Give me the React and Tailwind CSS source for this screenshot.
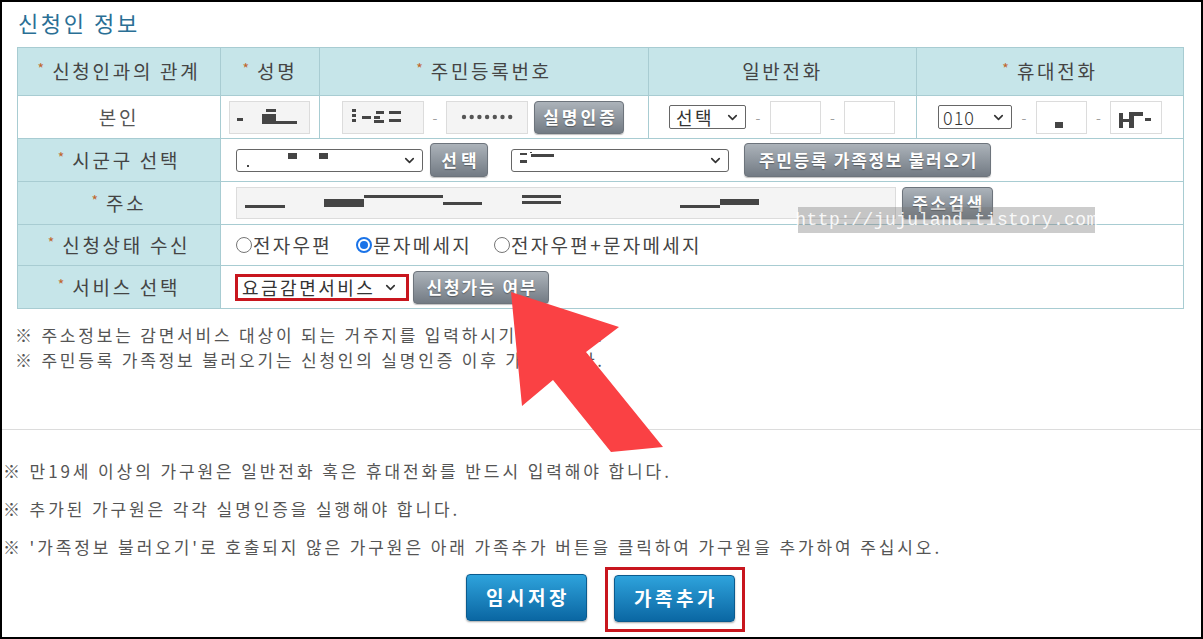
import React from "react";
import { ChevronDown } from "lucide-react";

function Star() {
  return (
    <span className="relative top-[-3px] mr-[8px] text-[14px] tracking-normal text-[#c0662b]">*</span>
  );
}

function Marks({ w, h, rects }) {
  return (
    <svg width={w} height={h} className="block">
      {rects.map(([x, y, rw, rh], i) => (
        <rect key={i} x={x} y={y} width={rw} height={rh} fill="#454545" />
      ))}
    </svg>
  );
}

function GrayBtn({ className, children }) {
  return (
    <div
      className={
        "flex shrink-0 items-center justify-center rounded-[4px] border border-[#6d747c] bg-linear-to-b from-[#acb3ba] to-[#737b84] text-[17px] font-bold text-white [text-shadow:0_1px_1px_rgba(0,0,0,0.35)] shadow-[0_1px_1px_rgba(0,0,0,0.25)] " +
        className
      }
    >
      {children}
    </div>
  );
}

function BlueBtn({ children }) {
  return (
    <div className="flex h-[47px] w-[121px] items-center justify-center rounded-[4px] border border-[#0b5b8e] bg-linear-to-b from-[#2ea3dc] to-[#0a67a3] pl-[3px] text-[19px] font-bold tracking-[3.5px] text-white shadow-[0_1px_2px_rgba(0,0,0,0.35)]">
      {children}
    </div>
  );
}

function Dash({ className }) {
  return <span className={"shrink-0 text-center text-[14px] text-[#a0a0a0] " + className}>-</span>;
}

function Radio({ checked }) {
  return checked ? (
    <span className="flex h-[16px] w-[16px] shrink-0 items-center justify-center rounded-full border-2 border-[#1a73e8] bg-white">
      <span className="block h-[8px] w-[8px] rounded-full bg-[#1a73e8]" />
    </span>
  ) : (
    <span className="block h-[16px] w-[16px] shrink-0 rounded-full border border-[#767676] bg-white" />
  );
}

const th = "border border-[#a8ccd2] bg-[#c6e5e9] p-0 text-[19px] font-normal tracking-[2.7px] text-[#444]";
const lab = "border border-[#a8ccd2] bg-[#c6e5e9] p-0 text-[19px] tracking-[2.7px] text-[#444]";
const td = "border border-[#a8ccd2] bg-white p-0";

export default function App() {
  return (
    <div className="relative h-[639px] w-[1203px] overflow-hidden border-2 border-black bg-white font-['Noto_Sans_CJK_KR',sans-serif] text-[#444]">
      <div className="h-[45px] pl-[16px] pt-[5px] text-[22px] leading-[30px] tracking-[2.6px] text-[#2a6f95]">
        신청인 정보
      </div>

      <table className="ml-[15px] w-[1166px] table-fixed border-collapse border border-[#a8ccd2]">
        <colgroup>
          <col className="w-[203px]" />
          <col className="w-[99px]" />
          <col className="w-[329px]" />
          <col className="w-[268px]" />
          <col className="w-[267px]" />
        </colgroup>
        <tbody>
          <tr className="h-[48px]">
            <th className={th}>
              <div className="flex items-center justify-center"><Star />신청인과의 관계</div>
            </th>
            <th className={th}>
              <div className="flex items-center justify-center"><Star />성명</div>
            </th>
            <th className={th}>
              <div className="flex items-center justify-center"><Star />주민등록번호</div>
            </th>
            <th className={th}>
              <div className="flex items-center justify-center">일반전화</div>
            </th>
            <th className={th}>
              <div className="flex items-center justify-center"><Star />휴대전화</div>
            </th>
          </tr>

          <tr className="h-[43px]">
            <td className={td + " text-center text-[19px] tracking-[2.7px] text-[#555]"}>본인</td>
            <td className={td}>
              <div className="flex items-center pl-[8px]">
                <div className="h-[33px] w-[81px] border border-[#dcdcdc] bg-[#f4f4f4]">
                  <Marks w={79} h={31} rects={[[7, 16, 6, 3], [32, 12, 14, 10], [46, 19, 21, 3], [36, 7, 10, 3]]} />
                </div>
              </div>
            </td>
            <td className={td}>
              <div className="flex items-center pl-[22px]">
                <div className="h-[33px] w-[82px] shrink-0 border border-[#dcdcdc] bg-[#f4f4f4]">
                  <Marks
                    w={80}
                    h={31}
                    rects={[[9, 7, 4, 3], [9, 12, 4, 3], [9, 17, 4, 3], [19, 14, 9, 3], [31, 14, 6, 3], [33, 9, 8, 3], [31, 18, 10, 3], [46, 9, 12, 3], [46, 17, 12, 3]]}
                  />
                </div>
                <Dash className="w-[22px]" />
                <div className="flex h-[33px] w-[82px] shrink-0 items-center justify-center border border-[#dcdcdc] bg-[#f4f4f4]">
                  <svg width="52" height="6">
                    {[0, 1, 2, 3, 4, 5, 6].map((i) => (
                      <circle key={i} cx={3 + i * 7.7} cy="3" r="2.2" fill="#555" />
                    ))}
                  </svg>
                </div>
                <GrayBtn className="ml-[6px] h-[33px] w-[90px] pl-[3px] tracking-[3px]">실명인증</GrayBtn>
              </div>
            </td>
            <td className={td}>
              <div className="flex items-center pl-[20px]">
                <div className="flex h-[24px] w-[77px] shrink-0 items-center justify-between rounded-[2px] border border-[#666] bg-white pl-[6px] pr-[5px] text-[18px] text-[#333]">
                  <span className="leading-none tracking-[2.5px]">선택</span>
                  <ChevronDown size={15} strokeWidth={2.6} color="#333" />
                </div>
                <Dash className="w-[24px]" />
                <div className="h-[33px] w-[51px] shrink-0 border border-[#dcdcdc] bg-white" />
                <Dash className="w-[23px]" />
                <div className="h-[33px] w-[51px] shrink-0 border border-[#dcdcdc] bg-white" />
              </div>
            </td>
            <td className={td}>
              <div className="flex items-center pl-[21px]">
                <div className="flex h-[24px] w-[74px] shrink-0 items-center justify-between rounded-[2px] border border-[#666] bg-white pl-[4px] pr-[5px] text-[18px] font-light tracking-[1px] text-[#333]">
                  <span className="leading-none">010</span>
                  <ChevronDown size={15} strokeWidth={2.6} color="#333" />
                </div>
                <Dash className="w-[24px]" />
                <div className="h-[33px] w-[51px] shrink-0 border border-[#dcdcdc] bg-white">
                  <Marks w={49} h={31} rects={[[18, 20, 8, 6]]} />
                </div>
                <Dash className="w-[23px]" />
                <div className="h-[33px] w-[52px] shrink-0 border border-[#dcdcdc] bg-white">
                  <Marks w={50} h={31} rects={[[8, 11, 4, 15], [12, 17, 6, 3], [18, 10, 5, 16], [23, 10, 9, 4], [34, 16, 6, 3]]} />
                </div>
              </div>
            </td>
          </tr>

          <tr className="h-[43px]">
            <td className={lab}>
              <div className="flex items-center justify-center"><Star />시군구 선택</div>
            </td>
            <td className={td} colSpan={4}>
              <div className="flex items-center pl-[15px]">
                <div className="flex h-[23px] w-[187px] shrink-0 items-center justify-between rounded-[3px] border border-[#666] bg-white pr-[5px]">
                  <Marks w={100} h={21} rects={[[10, 15, 2, 2], [51, 3, 9, 6], [82, 3, 9, 6]]} />
                  <ChevronDown size={15} strokeWidth={2.6} color="#333" />
                </div>
                <GrayBtn className="ml-[7px] h-[34px] w-[58px] pl-[4px] tracking-[4px]">선택</GrayBtn>
                <div className="ml-[23px] flex h-[23px] w-[218px] shrink-0 items-center justify-between rounded-[3px] border border-[#666] bg-white pr-[5px]">
                  <Marks w={60} h={21} rects={[[8, 3, 7, 2], [8, 10, 7, 3], [18, 2, 2, 1], [19, 4, 23, 3]]} />
                  <ChevronDown size={15} strokeWidth={2.6} color="#333" />
                </div>
                <GrayBtn className="ml-[15px] h-[34px] w-[247px] pl-[2px] tracking-[1.7px]">주민등록 가족정보 불러오기</GrayBtn>
              </div>
            </td>
          </tr>

          <tr className="h-[43px]">
            <td className={lab}>
              <div className="flex items-center justify-center"><Star />주소</div>
            </td>
            <td className={td} colSpan={4}>
              <div className="flex items-center pl-[15px]">
                <div className="h-[32px] w-[660px] shrink-0 border border-[#dcdcdc] bg-[#f4f4f4]">
                  <Marks
                    w={658}
                    h={30}
                    rects={[[8, 17, 40, 3], [87, 11, 40, 8], [127, 7, 79, 3], [206, 14, 39, 3], [285, 7, 39, 3], [285, 13, 39, 3], [443, 17, 40, 3], [483, 11, 39, 6]]}
                  />
                </div>
                <GrayBtn className="ml-[6px] h-[32px] w-[91px] pl-[2px] tracking-[2.5px]">주소검색</GrayBtn>
              </div>
            </td>
          </tr>

          <tr className="h-[41px]">
            <td className={lab}>
              <div className="flex items-center justify-center"><Star />신청상태 수신</div>
            </td>
            <td className={td} colSpan={4}>
              <div className="flex items-center pl-[15px] text-[19px] tracking-[2.3px] text-[#444]">
                <Radio />
                <span className="ml-[1px]">전자우편</span>
                <span className="ml-[24px] flex"><Radio checked /></span>
                <span className="ml-[1px]">문자메세지</span>
                <span className="ml-[22px] flex"><Radio /></span>
                <span className="ml-[1px]">전자우편+문자메세지</span>
              </div>
            </td>
          </tr>

          <tr className="h-[43px]">
            <td className={lab}>
              <div className="flex items-center justify-center"><Star />서비스 선택</div>
            </td>
            <td className={td} colSpan={4}>
              <div className="flex items-center pl-[14px]">
                <div className="flex h-[27px] w-[174px] shrink-0 items-center justify-between border-[3px] border-[#c8161e] bg-white pl-[4px] pr-[8px] text-[18px] tracking-[2.5px] text-[#333]">
                  <span className="leading-none">요금감면서비스</span>
                  <ChevronDown size={15} strokeWidth={2.6} color="#333" />
                </div>
                <GrayBtn className="ml-[4px] h-[33px] w-[136px] pl-[2px] tracking-[1.9px]">신청가능 여부</GrayBtn>
              </div>
            </td>
          </tr>
        </tbody>
      </table>

      <div className="h-[120px] pl-[13px] pt-[13px] text-[17px] leading-[25px] tracking-[2.8px] text-[#555]">
        <div>※ 주소정보는 감면서비스 대상이 되는 거주지를 입력하시기 바랍니다.</div>
        <div>※ 주민등록 가족정보 불러오기는 신청인의 실명인증 이후 가능합니다.</div>
      </div>

      <div className="border-t border-[#dcdcdc] pl-[1px] pt-[22px] text-[17px] leading-[38px] tracking-[2.9px] text-[#555]">
        <div>※ 만19세 이상의 가구원은 일반전화 혹은 휴대전화를 반드시 입력해야 합니다.</div>
        <div>※ 추가된 가구원은 각각 실명인증을 실행해야 합니다.</div>
        <div>※ '가족정보 불러오기'로 호출되지 않은 가구원은 아래 가족추가 버튼을 클릭하여 가구원을 추가하여 주십시오.</div>
      </div>

      <div className="mt-[1px] flex items-start justify-center pl-[8px]">
        <div className="mt-[7px]">
          <BlueBtn>임시저장</BlueBtn>
        </div>
        <div className="ml-[18px] border-[3px] border-[#c8161e] pb-[7px] pl-[6px] pr-[7px] pt-[5px]">
          <BlueBtn>가족추가</BlueBtn>
        </div>
      </div>

      <div className="absolute left-[796px] top-[205px] flex h-[26px] w-[297px] items-center justify-center bg-[rgba(120,120,120,0.38)] font-['Liberation_Mono',monospace] text-[18px] tracking-[0.4px] text-[rgba(255,255,255,0.9)]">
        http://jujuland.tistory.com
      </div>

      <svg className="pointer-events-none absolute left-[-2px] top-[-2px]" width="1203" height="639">
        <polygon
          points="511,292 619,327 586,352 663,447 611,452 553,380 522,406"
          fill="#fa4144"
        />
      </svg>
    </div>
  );
}
